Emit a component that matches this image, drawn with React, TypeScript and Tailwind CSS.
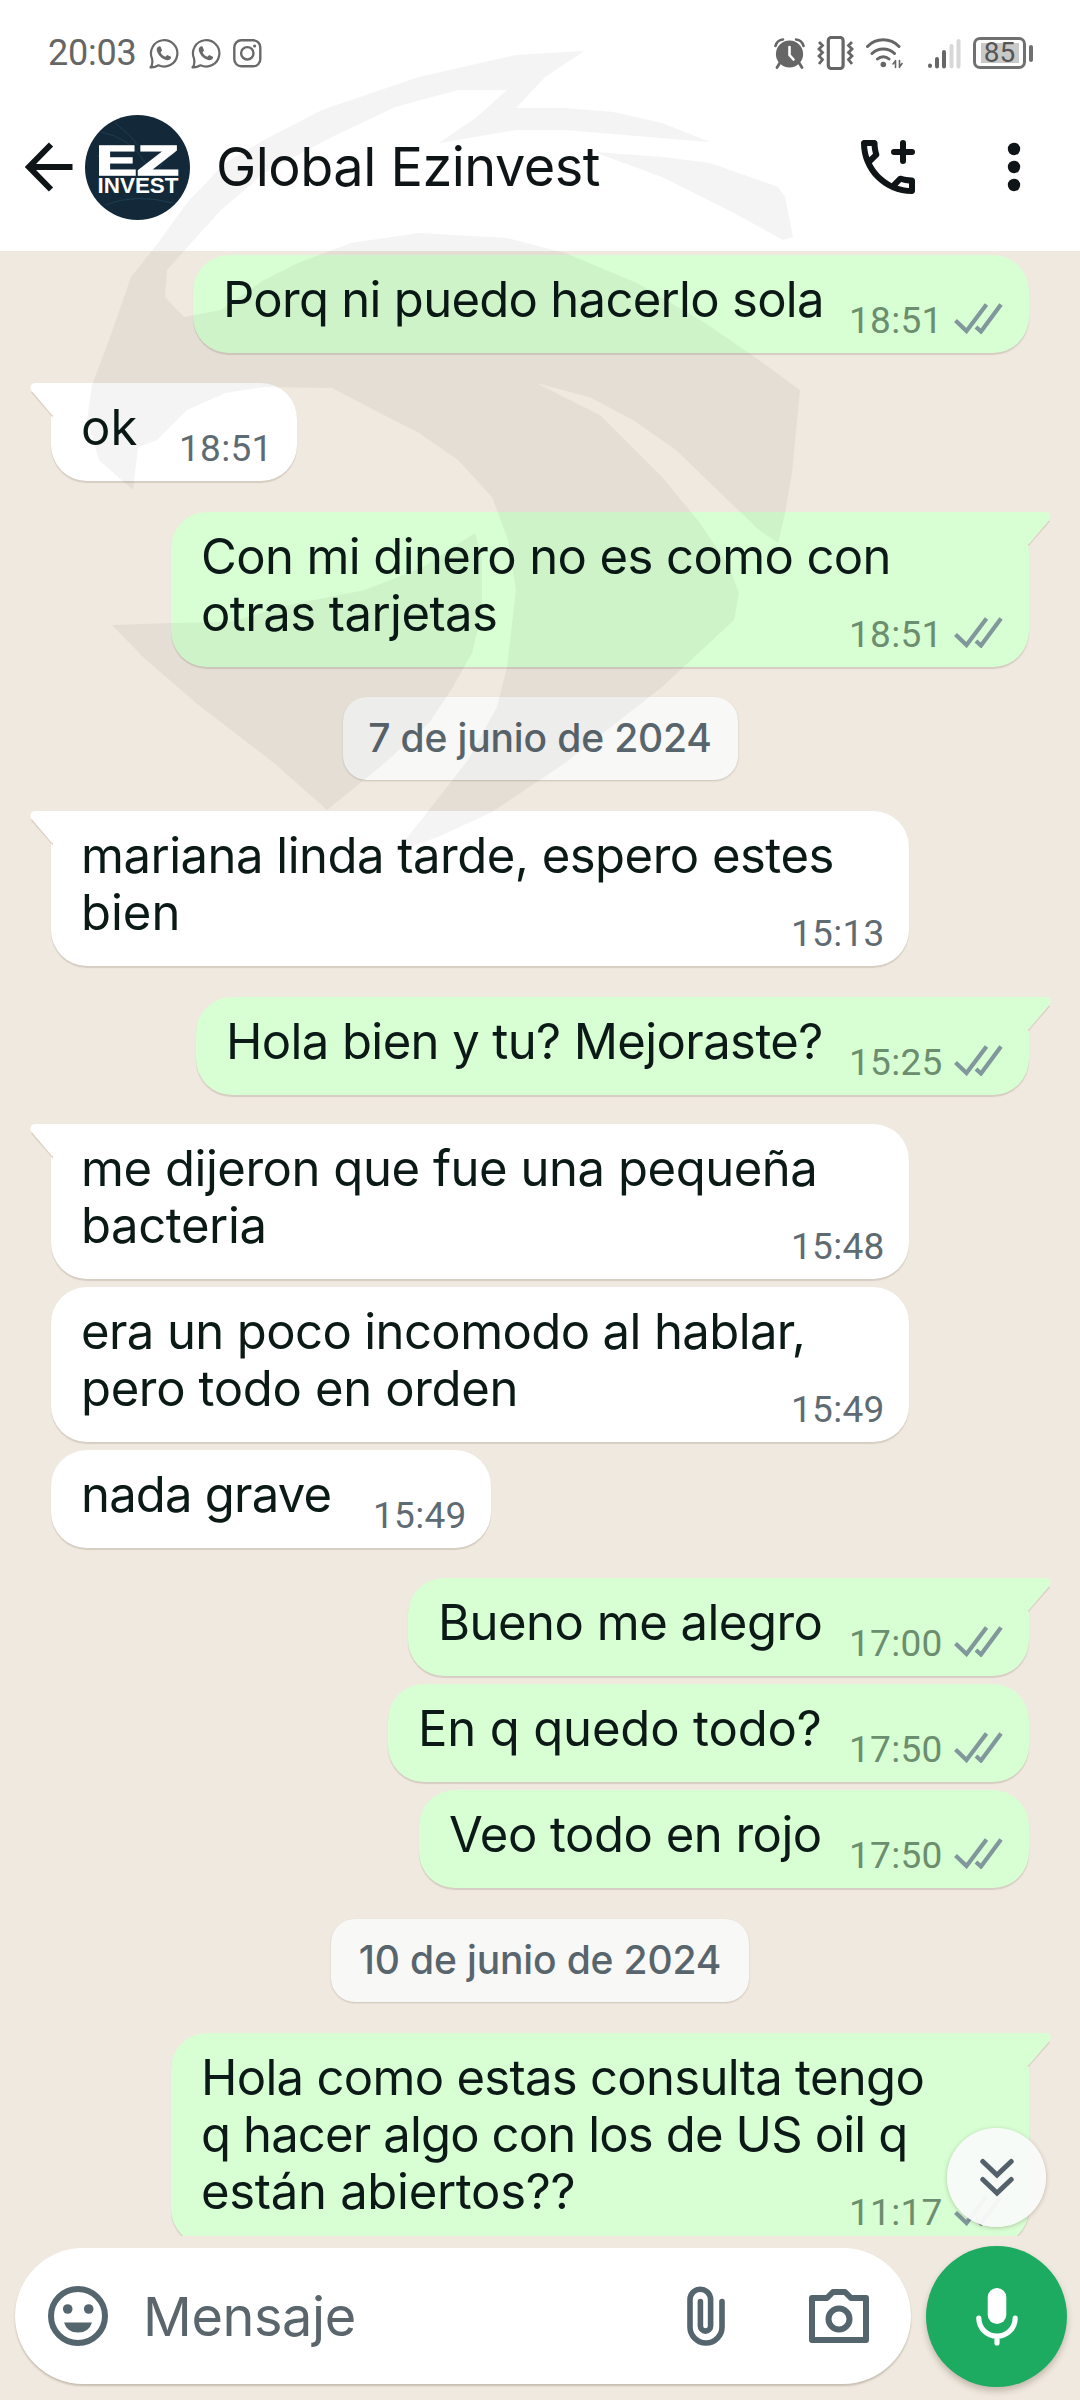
import clsx from "clsx";

type Line = { text: string; tracking?: string };

type Item =
  | { kind: "date"; text: string; width: string; gap: string }
  | {
      kind: "in" | "out";
      lines: Line[];
      time: string;
      width: string;
      gap: string;
      tail?: boolean;
    };

const items: Item[] = [
  {
    kind: "out",
    lines: [{ text: "Porq ni puedo hacerlo sola", tracking: "tracking-[-0.7px]" }],
    time: "18:51",
    width: "w-[836px]",
    gap: "mt-1",
  },
  { kind: "in", lines: [{ text: "ok" }], time: "18:51", width: "w-[246px]", gap: "mt-[30px]", tail: true },
  {
    kind: "out",
    lines: [
      { text: "Con mi dinero no es como con", tracking: "tracking-[-0.6px]" },
      { text: "otras tarjetas", tracking: "tracking-[-0.55px]" },
    ],
    time: "18:51",
    width: "w-[858px]",
    gap: "mt-[31px]",
    tail: true,
  },
  { kind: "date", text: "7 de junio de 2024", width: "w-[395px]", gap: "mt-[30px]" },
  {
    kind: "in",
    lines: [{ text: "mariana linda tarde, espero estes", tracking: "tracking-[-0.5px]" }, { text: "bien" }],
    time: "15:13",
    width: "w-[858px]",
    gap: "mt-[31px]",
    tail: true,
  },
  {
    kind: "out",
    lines: [{ text: "Hola bien y tu? Mejoraste?", tracking: "tracking-[-0.6px]" }],
    time: "15:25",
    width: "w-[833px]",
    gap: "mt-[31px]",
    tail: true,
  },
  {
    kind: "in",
    lines: [
      { text: "me dijeron que fue una pequeña", tracking: "tracking-[-0.45px]" },
      { text: "bacteria", tracking: "tracking-[-0.4px]" },
    ],
    time: "15:48",
    width: "w-[858px]",
    gap: "mt-[29px]",
    tail: true,
  },
  {
    kind: "in",
    lines: [
      { text: "era un poco incomodo al hablar,", tracking: "tracking-[-0.6px]" },
      { text: "pero todo en orden", tracking: "tracking-[-0.35px]" },
    ],
    time: "15:49",
    width: "w-[858px]",
    gap: "mt-2",
  },
  { kind: "in", lines: [{ text: "nada grave", tracking: "tracking-[-0.8px]" }], time: "15:49", width: "w-[440px]", gap: "mt-2" },
  {
    kind: "out",
    lines: [{ text: "Bueno me alegro", tracking: "tracking-[-0.5px]" }],
    time: "17:00",
    width: "w-[621px]",
    gap: "mt-[30px]",
    tail: true,
  },
  { kind: "out", lines: [{ text: "En q quedo todo?", tracking: "tracking-[-0.15px]" }], time: "17:50", width: "w-[641px]", gap: "mt-2" },
  { kind: "out", lines: [{ text: "Veo todo en rojo", tracking: "tracking-[-0.5px]" }], time: "17:50", width: "w-[610px]", gap: "mt-2" },
  { kind: "date", text: "10 de junio de 2024", width: "w-[418px]", gap: "mt-[31px]" },
  {
    kind: "out",
    lines: [
      { text: "Hola como estas consulta tengo", tracking: "tracking-[-0.7px]" },
      { text: "q hacer algo con los de US oil q", tracking: "tracking-[-0.85px]" },
      { text: "están abiertos??", tracking: "tracking-[-0.3px]" },
    ],
    time: "11:17",
    width: "w-[858px]",
    gap: "mt-[31px]",
    tail: true,
  },
];

function WhatsAppIcon() {
  return (
    <svg width="30" height="31" viewBox="0 0 30 31" fill="none">
      <path d="M3 20.5A13.2 13.2 0 1 1 9.5 27.3Q5 29.8 1.5 29.3Q4.2 26.5 3 20.5Z" stroke="#696969" strokeWidth="2.2" strokeLinejoin="round" />
      <path d="M10.2 8.2c-2 .6-3 2.6-2.2 5 1.5 4.3 5 7.7 9.2 8.9 2.4.6 4.3-.4 4.9-2.3l-.2-1-3.6-1.9-2 1.9c-2.2-.9-3.9-2.6-4.7-4.6l1.5-1.8-1.6-4z" fill="#696969" />
    </svg>
  );
}

function InstagramIcon() {
  return (
    <svg width="29" height="29" viewBox="0 0 29 29" fill="none" stroke="#696969" strokeWidth="2.4">
      <rect x="1.3" y="1.3" width="26" height="26" rx="7" />
      <circle cx="14.3" cy="14.3" r="6.2" />
      <circle cx="21.6" cy="7" r="1.6" fill="#696969" stroke="none" />
    </svg>
  );
}

function StatusBar() {
  return (
    <div className="flex h-[106px] items-center pl-[48px] pr-[47px] text-[#666]">
      <span className="w-[101px] whitespace-nowrap font-[Roboto] text-[36px] leading-none tracking-[-0.2px]">20:03</span>
      <WhatsAppIcon />
      <span className="w-3" />
      <WhatsAppIcon />
      <span className="w-3" />
      <InstagramIcon />
      <div className="ml-auto flex items-center">
        {/* alarm */}
        <svg width="31" height="31" viewBox="0 0 31 31" fill="none" strokeLinecap="round">
          <circle cx="15.5" cy="16" r="13.6" fill="#666" />
          <path d="M1.5 8Q3 2 9 1.5M29.5 8Q28 2 22 1.5" stroke="#666" strokeWidth="2.6" />
          <path d="M5.5 25.5L3 29.5M25.500 25.500L28 29.500" stroke="#666" strokeWidth="2.8" />
          <path d="M15.5 9v8l4 4.5" stroke="#fff" strokeWidth="2.6" />
        </svg>
        {/* vibrate */}
        <svg className="ml-3" width="37" height="34" viewBox="0 0 37 34" fill="none" stroke="#666">
          <rect x="11.3" y="1.5" width="14.8" height="31" rx="3" strokeWidth="3.2" />
          <path d="M2 6l3.5 3.5L2 13l3.5 3.5L2 20l3.5 3.5L2 28M35 6l-3.5 3.5L35 13l-3.5 3.5L35 20l-3.5 3.5L35 28" strokeWidth="2.8" />
        </svg>
        {/* wifi */}
        <svg className="ml-3" width="38" height="32" viewBox="0 0 38 32" fill="none" stroke="#666" strokeWidth="3" strokeLinecap="round">
          <path d="M1.5 9.5A22 22 0 0 1 33 9.5M6 16.500a16 16 0 0 1 22.500 0M11.500 22a8.500 8.500 0 0 1 11.500 0" />
          <circle cx="17.3" cy="27.5" r="2.8" fill="#666" stroke="none" />
          <path d="M29.5 23.5v7M33.500 23.500v7M27 27l2.500-3M33.500 30l2.500-3.500" strokeWidth="1.6" />
        </svg>
        {/* signal */}
        <svg className="ml-6" width="33" height="31" viewBox="0 0 33 31" strokeWidth="4" strokeLinecap="round" stroke="#666">
          <path d="M2 28v-.5M9 28.500V21M16 28.500V14" />
          <path d="M23.5 28.5V8M30.500 28.500V3" stroke="#d8d8d8" />
        </svg>
        {/* battery */}
        <div className="ml-[12px] flex h-[32px] w-[53px] items-center justify-center rounded-[7px] border-[3px] border-[#707070] bg-white">
          <span className="flex h-[20px] w-[38px] items-center justify-center bg-[#c9c9c9] font-[Roboto] text-[28px] leading-none text-[#555]">
            85
          </span>
        </div>
        <span className="ml-[3px] h-[17px] w-1 rounded-full bg-[#707070]" />
      </div>
    </div>
  );
}

function Avatar() {
  return (
    <svg width="105" height="105" viewBox="0 0 105 105">
      <circle cx="52.5" cy="52.5" r="52.5" fill="#13293a" />
      <g fill="none" stroke="#2a5068" strokeWidth="1" opacity="0.5">
        <path d="M16 17Q45 22 62 50M30 8Q50 24 52 30M20 90Q50 78 88 88M12 42Q20 32 30 30M90 38Q76 44 70 62" />
      </g>
      <g fill="#fff" className="font-['Liberation_Sans'] font-bold">
        <text x="11" y="59.5" fontSize="42" textLength="41" lengthAdjust="spacingAndGlyphs" stroke="#fff" strokeWidth="1.5">
          E
        </text>
        <text x="0" y="0" fontSize="42" textLength="42" lengthAdjust="spacingAndGlyphs" stroke="#fff" strokeWidth="1.5" transform="translate(52 59.5)">
          Z
        </text>
        <text x="12.5" y="77.5" fontSize="21.5" textLength="81" lengthAdjust="spacingAndGlyphs">
          INVEST
        </text>
      </g>
    </svg>
  );
}

function ChatHeader() {
  return (
    <div className="flex h-[122px] items-center pl-[25px] pr-[59px]">
      <svg width="48" height="50" viewBox="0 0 48 50" fill="none" stroke="#0f1517" strokeWidth="6">
        <path d="M47.5 25H4M26 2.500L4 25L26 47.500" />
      </svg>
      <div className="ml-[12px]">
        <Avatar />
      </div>
      <h1 className="ml-[26px] whitespace-nowrap text-[54px] leading-none tracking-[-0.5px] text-[#0f1517]">Global Ezinvest</h1>
      <svg className="ml-auto" width="54" height="54" viewBox="3 3 18 18" fill="#0f1517">
        <path d="M6.54 5c.06.89.21 1.76.45 2.59l-1.2 1.2c-.41-1.2-.67-2.47-.76-3.79h1.51m9.86 12.02c.85.24 1.72.39 2.6.45v1.49c-1.32-.09-2.59-.35-3.8-.75l1.2-1.19M7.5 3H4c-.55 0-1 .45-1 1 0 9.39 7.61 17 17 17 .55 0 1-.45 1-1v-3.49c0-.55-.45-1-1-1-1.24 0-2.45-.2-3.57-.57-.1-.04-.21-.05-.31-.05-.26 0-.51.1-.71.29l-2.2 2.2c-2.83-1.45-5.15-3.76-6.59-6.59l2.2-2.2c.28-.28.36-.67.25-1.02C8.7 6.45 8.5 5.25 8.5 4c0-.55-.45-1-1-1z" />
        <path d="M17 4v6M14 7h6" stroke="#0f1517" strokeWidth="2" strokeLinecap="round" />
      </svg>
      <svg className="ml-[92px]" width="14" height="50" viewBox="0 0 14 50" fill="#0f1517">
        <circle cx="7" cy="7" r="6.2" />
        <circle cx="7" cy="25" r="6.2" />
        <circle cx="7" cy="43" r="6.2" />
      </svg>
    </div>
  );
}

function Ticks() {
  return (
    <svg width="49" height="31" viewBox="0 0 49 31" fill="none" stroke="#80979c" strokeWidth="4.2">
      <path d="M1.5 17.5L12.5 28L32.500 1.500M22 24L27 28.500L47 1.500" />
    </svg>
  );
}

function Bubble({ item }: { item: Exclude<Item, { kind: "date" }> }) {
  const out = item.kind === "out";
  return (
    <div className={clsx("flex shrink-0 px-[51px]", item.gap, out && "justify-end")}>
      <div
        className={clsx(
          "relative flex items-end justify-between rounded-[36px] pt-4 shadow-[0_2px_1px_rgba(60,40,20,0.14)]",
          item.width,
          out ? "bg-[#d8fed3] pl-[30px] pr-[26px]" : "bg-white pl-[30px] pr-[24px]",
          item.tail && (out ? "rounded-tr-none" : "rounded-tl-none"),
        )}
      >
        {item.tail && (
          <svg
            className={clsx("absolute top-0", out ? "-right-[22px]" : "-left-[21px] -scale-x-100")}
            width="23"
            height="34"
            viewBox="0 0 23 34"
          >
            <path d="M0 33.5L21.5 9" stroke="#dccfc4" strokeWidth="1.5" />
            <path d="M0 0H18Q24 1 22 7L1 32H0Z" fill={out ? "#d8fed3" : "#fff"} />
          </svg>
        )}
        {/* zero width, so that a long line runs over the space above the time */}
        <div className="w-0 pb-[25px] text-[49px] leading-[57px] text-[#0b1a16]">
          {item.lines.map((line) => (
            <div key={line.text} className={clsx("h-[57px] whitespace-nowrap", line.tracking)}>
              {line.text}
            </div>
          ))}
        </div>
        <div
          className={clsx(
            "flex items-end pb-[19px] font-[Roboto] text-[37px] leading-[27px] tracking-[0.3px]",
            out ? "text-[#6b8e6e]" : "text-[#5f6b73]",
          )}
        >
          <span className={clsx("whitespace-nowrap", out ? "w-[105px]" : "w-[94px]")}>{item.time}</span>
          {out && <Ticks />}
        </div>
      </div>
    </div>
  );
}

function DateChip({ text, width, gap }: { text: string; width: string; gap: string }) {
  return (
    <div className={clsx("flex shrink-0 justify-center", gap)}>
      <div
        className={clsx(
          "flex h-[83px] items-center justify-center whitespace-nowrap rounded-[24px] bg-[#f8f8f7] text-[39px] font-medium tracking-[-0.15px] text-[#59656c] shadow-[0_1px_2px_rgba(60,40,20,0.2)]",
          width,
        )}
      >
        {text}
      </div>
    </div>
  );
}

function Composer() {
  return (
    <div className="flex h-[164px] items-start bg-[#f0e9df] pl-[15px] pt-[10px]">
      <div className="mt-[2px] flex h-[136px] w-[896px] items-center rounded-full bg-white pl-[33px] pr-[42px] shadow-[0_2px_2px_rgba(60,40,20,0.22)]">
        <svg width="60" height="60" viewBox="0 0 60 60" fill="#54656d">
          <circle cx="30" cy="30" r="27" fill="none" stroke="#54656d" strokeWidth="6" />
          <circle cx="19.7" cy="23" r="4.8" />
          <circle cx="40.7" cy="23" r="4.8" />
          <path d="M16 36.5H44Q41 46.500 30 46.500T16 36.500Z" />
        </svg>
        <span className="ml-[35px] mt-[2px] whitespace-nowrap text-[54px] leading-none tracking-[-0.4px] text-[#5b666c]">Mensaje</span>
        <svg className="ml-auto" width="38" height="60" viewBox="0 0 38 60" fill="none" stroke="#54656d" strokeWidth="5.6" strokeLinecap="round">
          <path d="M35 15.5V41A16 16 0 0 1 3 41V13.500A10.300 10.300 0 0 1 23.600 13.500V40A5.100 5.100 0 0 1 13.400 40V15.500" />
        </svg>
        <svg className="ml-[84px]" width="60" height="54" viewBox="0 0 60 54" fill="none" stroke="#54656d" strokeWidth="6" strokeLinejoin="round">
          <path d="M3 9H18L24 3H36L42 9H57V51H3Z" />
          <circle cx="30" cy="30" r="10.5" />
        </svg>
      </div>
      <button className="ml-[15px] flex h-[141px] w-[141px] items-center justify-center rounded-full bg-[#1dab61] shadow-[0_4px_6px_rgba(60,40,20,0.25)]">
        <svg width="42" height="58" viewBox="0 0 42 58" fill="none" stroke="#fff" strokeWidth="5.2" strokeLinecap="round">
          <rect x="11.7" y="0" width="18.6" height="36" rx="9.3" fill="#fff" stroke="none" />
          <path d="M2.8 30a18.2 18.2 0 0 0 36.4 0M21 49V55" />
        </svg>
      </button>
    </div>
  );
}

/* Translucent eagle emblem laid over the upper half of the screen */
function Emblem() {
  return (
    <svg className="pointer-events-none absolute left-0 top-0" width="1080" height="900" viewBox="0 0 1080 900" fill="#000" opacity="0.04">
      <path d="M584 51L516 55L419 77L322 110L264 140L225 163L187 203L158 243L131 277L109 340L92 385L87 420L99 460L133 490L138 447L157 440L187 410L225 393L264 387L332 388L380 413L419 433L458 460L492 497L508 540L516 590L507 667L497 707L468 760L429 810L395 853L440 836L492 812L565 763L662 687L705 647L734 620L739 593L729 567L700 523L662 477L628 443L600 415L536 383L589 397L633 420L676 450L710 483L759 530L778 543L785 513L792 473L800 390L759 360L705 323L637 283L565 253L507 238L419 233L351 243L298 263L264 280L221 310L184 317L165 297L167 270L191 243L221 210L264 173L332 137L395 107L458 90L507 90L477 117L439 143L516 130L565 130L637 136L710 142L662 123L613 112L565 108L516 108L545 77Z" />
      <path d="M594 152L662 157L710 163L778 187L785 197L793 237L783 240L734 213L662 177Z" />
      <path d="M112 625L172 623L230 622L289 605L365 590L423 567L475 533L482 560L482 613L472 653L453 687L429 723L380 767L327 810L274 763L196 703L143 657Z" />
    </svg>
  );
}

export default function App() {
  return (
    <div className="relative flex h-[2400px] w-[1080px] flex-col overflow-hidden bg-white font-[Inter,sans-serif]">
      <div className="h-[251px] shrink-0 bg-white">
        <StatusBar />
        <ChatHeader />
      </div>

      <div className="relative flex h-[1985px] flex-col overflow-hidden bg-[#f0e9df]">
        {items.map((item, idx) =>
          item.kind === "date" ? (
            <DateChip key={idx} text={item.text} width={item.width} gap={item.gap} />
          ) : (
            <Bubble key={idx} item={item} />
          ),
        )}
        <button className="absolute bottom-[9px] right-[34px] flex h-[99px] w-[99px] items-center justify-center rounded-full bg-[#f9fbf9]/95 shadow-[0_1px_4px_rgba(60,40,20,0.25)]">
          <svg width="34" height="40" viewBox="0 0 34 40" fill="none" stroke="#54606a" strokeWidth="5" strokeLinecap="round">
            <path d="M2.8 3.5L17 17L31.200 3.500M2.800 21.500L17 35L31.200 21.500" />
          </svg>
        </button>
      </div>

      <Composer />
      <Emblem />
    </div>
  );
}
